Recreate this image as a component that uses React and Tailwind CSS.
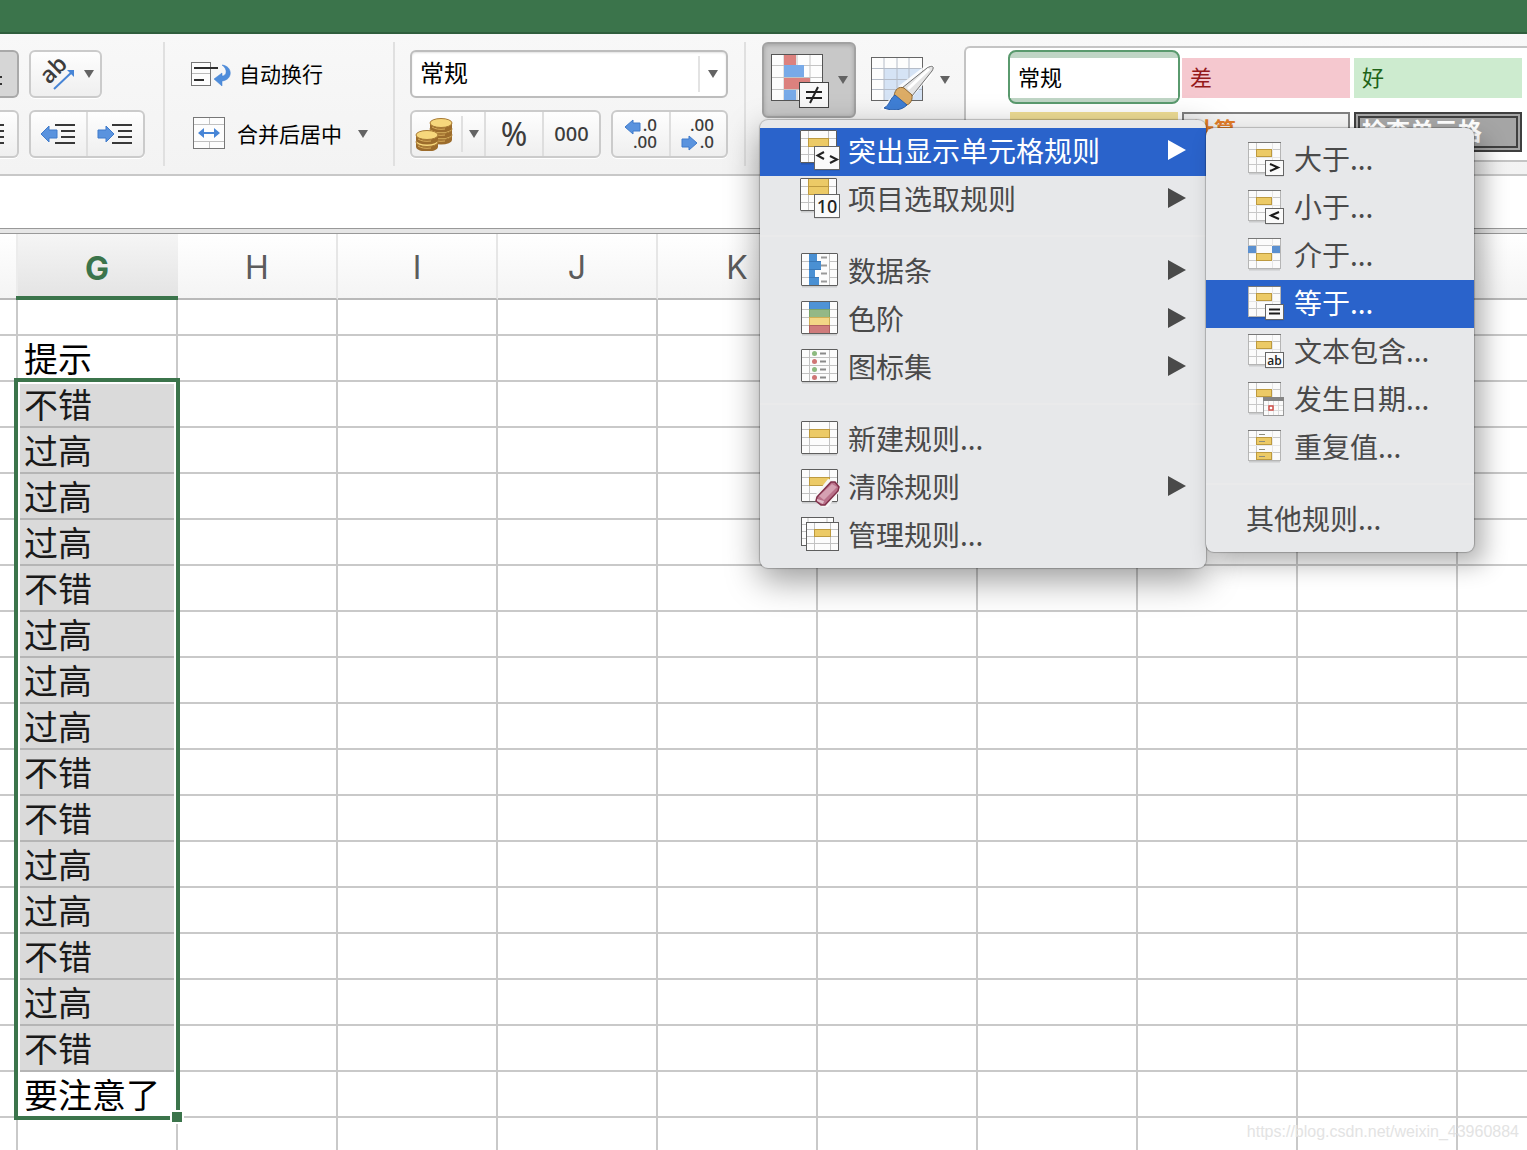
import { useState } from 'react';

const COLUMNS = ['G', 'H', 'I', 'J', 'K', 'L', 'M', 'N', 'O', 'P'];
const TIPS = ['不错', '过高', '过高', '过高', '不错', '过高', '过高', '过高', '不错', '不错', '过高', '过高', '不错', '过高', '不错', '要注意了'];

const RULE_MENU = [
  { label: '突出显示单元格规则', icon: 'compare', arrow: true },
  { label: '项目选取规则', icon: 'top10', arrow: true },
  null,
  { label: '数据条', icon: 'bars', arrow: true },
  { label: '色阶', icon: 'scales', arrow: true },
  { label: '图标集', icon: 'iconset', arrow: true },
  null,
  { label: '新建规则...', icon: 'new' },
  { label: '清除规则', icon: 'clear', arrow: true },
  { label: '管理规则...', icon: 'manage' },
];

const HIGHLIGHT_MENU = [
  { label: '大于...', icon: 'gt' },
  { label: '小于...', icon: 'lt' },
  { label: '介于...', icon: 'between' },
  { label: '等于...', icon: 'eq' },
  { label: '文本包含...', icon: 'text' },
  { label: '发生日期...', icon: 'date' },
  { label: '重复值...', icon: 'dup' },
  null,
  { label: '其他规则...' },
];

const BUTTON = 'border-2 border-[#cbcbcb] bg-linear-to-b from-[#fefefe] to-[#efefef] flex items-center shadow-[0_1px_0_#fff]';

function Caret() {
  return (
    <svg width="10" height="8" viewBox="0 0 10 8" className="shrink-0"><path d="M0 0H10L5 8Z" fill="#636363" /></svg>
  );
}

function Separator({ className = '' }) {
  return <div className={`w-0.5 h-[124px] mt-2 bg-[#e0e0e0] shrink-0 ${className}`} />;
}

/* ---------- ribbon icons ---------- */

function OrientationIcon() {
  return (
    <svg width="50" height="44" viewBox="0 0 50 44" className="shrink-0 overflow-visible">
      <text x="18" y="33" transform="rotate(-45 18 33)" fontSize="23" fontFamily="Open Sans, sans-serif" fontWeight="600" fill="#3c3c3c">ab</text>
      <path d="M23 37L41 20" stroke="#4785d6" strokeWidth="2" fill="none" />
      <path d="M36 18H43V25Z" fill="#4785d6" />
    </svg>
  );
}

function IndentIcon({ right }) {
  return (
    <svg width="36" height="24" viewBox="0 0 36 24">
      <path d={right ? 'M17 12L9 4V8H1V16H9V20Z' : 'M1 12L9 4V8H17V16H9V20Z'} fill="#5a93de" stroke="#3f7bcb" />
      <path d="M15 3H35M21 9H35M21 15H35M15 21H35" stroke="#383838" strokeWidth="2" />
    </svg>
  );
}

function WrapIcon() {
  return (
    <svg width="40" height="30" viewBox="0 0 40 30">
      <rect x=".5" y="3.500" width="19" height="23" fill="#fdfdfd" stroke="#777" />
      <path d="M1 14.500H19" stroke="#bbb" />
      <path d="M3 9H27M3 21H13" stroke="#2e2e2e" strokeWidth="2" />
      <path d="M31 6C42 7 42 21 31 22V27L23 20L31 14V17C36 17 37 10 31 6Z" fill="#4f8ddb" stroke="#3f7fd0" strokeWidth=".5" />
    </svg>
  );
}

function MergeIcon() {
  return (
    <svg width="34" height="34" viewBox="0 0 34 34">
      <rect x="2.500" y=".5" width="31" height="31" fill="#fdfdfd" stroke="#777" />
      <path d="M3 7.500H33M3 24.500H33M18.500 1V7M18.500 25V31" stroke="#c0c0c0" />
      <path d="M7 16L13 11V15H23V11L29 16L23 21V17H13V21Z" fill="#4785d6" />
    </svg>
  );
}

function Coin({ x, y }) {
  return (
    <g>
      <path d={`M${x - 11} ${y}V${y + 5}A11 4.500 0 0 0 ${x + 11} ${y + 5}V${y}Z`} fill="#9c6c2c" />
      <ellipse cx={x} cy={y} rx="11" ry="4.500" fill="#f7d77c" stroke="#a87a35" />
      <path d={`M${x - 9} ${y + 4}A11 4.500 0 0 0 ${x + 4} ${y + 6}`} stroke="#d9ae5c" fill="none" />
    </g>
  );
}

function CoinsIcon() {
  return (
    <svg width="40" height="34" viewBox="0 0 40 34">
      <Coin x={26} y={18} />
      <Coin x={26} y={12} />
      <Coin x={26} y={6} />
      <Coin x={12} y={25} />
      <Coin x={12} y={18} />
    </svg>
  );
}

function DecimalIcon({ more }) {
  return (
    <svg width="38" height="44" viewBox="0 0 38 44" fontFamily="Noto Sans, sans-serif" fontSize="17" fontWeight="500" fill="#3c3c3c">
      <text x="35" y="19" textAnchor="end">{more ? '.0' : '.00'}</text>
      <text x="35" y="36" textAnchor="end">{more ? '.00' : '.0'}</text>
      <path d={more ? 'M3 15L11 8V11H18V19H11V22Z' : 'M18 31L10 24V27H3V35H10V38Z'} fill="#5a93de" stroke="#3f7bcb" />
    </svg>
  );
}

function ConditionalIcon() {
  return (
    <svg width="60" height="60" viewBox="0 -3 60 60">
      <rect x="1.500" y="1.500" width="51" height="46" fill="#fdfdfd" />
      <path d="M14 1V48M27 1V48M40 1V48M1 12.500H53M1 24.500H53M1 36.500H53" stroke="#c4c4c4" />
      <path d="M14 2H26V12H14ZM14 25H40V36H14Z" fill="#dc817e" />
      <path d="M14 12H34V24H14ZM14 37H26V47H14Z" fill="#78aae8" />
      <rect x="1.500" y="1.500" width="51" height="46" fill="none" stroke="#555" />
      <rect x="29.500" y="29.500" width="29" height="25" fill="#f8f8f8" stroke="#444" />
      <path d="M36 39H52M36 45H52M48 34L40 50" stroke="#222" strokeWidth="2" fill="none" />
    </svg>
  );
}

function TableFormatIcon() {
  return (
    <svg width="64" height="60" viewBox="0 -4 64 60">
      <rect x="1.500" y="3.500" width="51" height="43" fill="#fdfdfd" />
      <path d="M14 14H52V46H14Z" fill="#d5e3f5" />
      <path d="M14 3V47M27 3V47M39 3V47M1 14.500H53M1 25.500H53M1 35.500H53" stroke="#b5bcc8" />
      <rect x="1.500" y="3.500" width="51" height="43" fill="none" stroke="#666" />
      <path d="M64 12L61 22L44 41L38 50L26 56L10 56L24 40L30 31L52 14L60 10Z" fill="#fff" opacity=".85" />
      <path d="M32 34L57 14C62 11 65 12 62 17L42 42Z" fill="#e4e4e4" stroke="#707070" />
      <path d="M38 35L59 15" stroke="#fff" strokeWidth="3" />
      <path d="M24 42C25 35 29 32 34 34L42 41C43 48 38 52 34 51Z" fill="#dcac66" stroke="#8a6430" />
      <path d="M25 41L37 51C31 57 22 57 14 54C20 51 20 44 25 41Z" fill="#3f7fd6" stroke="#2c60ad" />
    </svg>
  );
}

/* ---------- menu icons ---------- */

function Sheet({ x = 1, y = 5, children }) {
  return (
    <g transform={`translate(${x} ${y})`}>
      <path d="M1 33.500H36" stroke="#000" opacity=".12" strokeWidth="2" />
      <rect x=".5" y=".5" width="36" height="32" fill="#fcfcfc" />
      <path d="M8.500 0V33M28.500 0V33M0 8.500H37M0 16.500H37M0 24.500H37" stroke="#c2c2c2" />
      {children}
      <rect x=".5" y=".5" width="36" height="32" rx=".5" fill="none" stroke="#5e5e5e" />
    </g>
  );
}

function Badge({ x, y, w, h, children }) {
  return (
    <g>
      <rect x={x} y={y + 1} width={w} height={h} fill="#000" opacity=".15" />
      <rect x={x} y={y} width={w} height={h} fill="#fafafa" stroke="#666" />
      {children}
    </g>
  );
}

const GOLD = { fill: '#ecca66', stroke: '#bd9a3f' };

function RuleIcon({ name }) {
  return (
    <svg width="40" height="48" viewBox="0 0 40 48" className="shrink-0">
      {name === 'compare' && (
        <>
          <Sheet x={0} y={2}><rect x="8.500" y="8.500" width="20" height="8" {...GOLD} /></Sheet>
          <Badge x={14.5} y={18.5} w={25} h={23}>
            <path d="M24 24L17.500 27.500L24 31M30 28L37 31.500L30 35" stroke="#222" strokeWidth="2" fill="none" />
          </Badge>
        </>
      )}
      {name === 'top10' && (
        <>
          <Sheet x={0} y={2}><path d="M8.500 .5H28.500V16.500H8.500ZM8.500 8.500H28.500" {...GOLD} /></Sheet>
          <Badge x={14.5} y={18.5} w={25} h={23}>
            <text x="27" y="37" textAnchor="middle" fontSize="18" fontWeight="500" fontFamily="Noto Sans, sans-serif" fill="#222">10</text>
          </Badge>
        </>
      )}
      {name === 'bars' && (
        <Sheet>
          <path d="M9 1H28V32H9Z" fill="#fcfcfc" />
          <path d="M8 1H16V8H20V16H14V24H18V32H8Z" fill="#4a90d3" />
          <path d="M8 8.500H20M8 16.500H20M8 24.500H18" stroke="#3b79b8" />
          <path d="M20 4.500H26M20 12.500H26M20 20.500H26M20 28.500H26" stroke="#999" strokeWidth="2" />
        </Sheet>
      )}
      {name === 'scales' && (
        <Sheet>
          <rect x="8.500" y=".5" width="20" height="8" fill="#4f93d6" stroke="#3f7fbf" />
          <rect x="8.500" y="8.500" width="20" height="8" fill="#94b886" stroke="#7ba56c" />
          <rect x="8.500" y="16.500" width="20" height="8" fill="#f3d686" stroke="#cfae55" />
          <rect x="8.500" y="24.500" width="20" height="8" fill="#cf7b7b" stroke="#b06060" />
        </Sheet>
      )}
      {name === 'iconset' && (
        <Sheet>
          {[4.5, 12.5, 20.5, 28.5].map((y, i) => (
            <g key={y}>
              <circle cx="13.500" cy={y} r="2.500" fill={i % 2 ? '#cf7575' : '#8cba7f'} />
              <path d={`M19 ${y}H25`} stroke="#8a8a8a" strokeWidth="2" />
            </g>
          ))}
        </Sheet>
      )}
      {name === 'new' && <Sheet><rect x="8.500" y="8.500" width="20" height="8" {...GOLD} /></Sheet>}
      {name === 'clear' && (
        <>
          <Sheet><rect x="8.500" y="8.500" width="20" height="8" {...GOLD} /></Sheet>
          <path d="M13 34L28 15L34 16L42 24L28 43L22 43Z" fill="#f6f6f6" />
          <path d="M17 33L31 18L35 18L39 23L38 27L25 41L21 41L16 37Z" fill="#b9718a" stroke="#80304a" strokeWidth="1.500" />
          <path d="M19 32L32 20L37 23L24 36Z" fill="#d5a1b2" />
          <path d="M17 35L24 37L23 40L17 37Z" fill="#e0bcc8" />
        </>
      )}
      {name === 'manage' && (
        <>
          <rect x="1.500" y="5.500" width="32" height="28" fill="#fcfcfc" stroke="#5e5e5e" />
          <path d="M8 6V10M27 6V10M2 12.500H6M2 19.500H6M2 26.500H6" stroke="#c2c2c2" />
          <rect x="6.500" y="10.500" width="32" height="28" fill="#fcfcfc" />
          <path d="M14.500 10V38M30.500 10V38M7 17.500H38M7 24.500H38M7 31.500H38" stroke="#c2c2c2" />
          <rect x="14.500" y="17.500" width="16" height="7" {...GOLD} />
          <rect x="6.500" y="10.500" width="32" height="28" fill="none" stroke="#5e5e5e" />
        </>
      )}
    </svg>
  );
}

function HighlightIcon({ name }) {
  const mark = { gt: 'M22 28L30 31.500L22 35', lt: 'M31 28L23 31.500L31 35', eq: 'M21 29.500H32M21 33.500H32' }[name];

  return (
    <svg width="40" height="48" viewBox="-2 0 40 48" className="shrink-0">
      <path d="M1 37.500H32" stroke="#000" opacity=".12" strokeWidth="2" />
      <rect x=".5" y="6.500" width="32" height="30" fill="#fbfbfb" stroke="#b5b5b5" />
      <path d="M8.500 7V36M1 13.500H32M1 28.500H32" stroke="#c8c8c8" />
      <path d="M24.500 7V36M1 21.500H32" stroke="#e6e6e6" />
      <path d="M0 6.500H33" stroke="#777" />
      {name === 'between' && (
        <>
          <path d="M0 14H8V21H0ZM24 14H32V21H24Z" fill="#5b90d0" />
          <rect x="8.500" y="21.500" width="15" height="7" {...GOLD} />
        </>
      )}
      {name === 'dup' && (
        <>
          <rect x="8.500" y="13.500" width="15" height="7" {...GOLD} />
          <rect x="8.500" y="28.500" width="15" height="7" {...GOLD} />
          <path d="M11 10.500H17M11 17.500H17M11 25.500H17M11 32.500H17" stroke="#8d8d7a" />
        </>
      )}
      {name !== 'between' && name !== 'dup' && <rect x="8.500" y="13.500" width="15" height="7" {...GOLD} />}
      {mark && (
        <Badge x={17.5} y={24.5} w={18} h={15}>
          <path d={mark} stroke="#1a1a1a" strokeWidth="2" fill="none" />
        </Badge>
      )}
      {name === 'text' && (
        <Badge x={17.5} y={24.5} w={18} h={15}>
          <text x="26.500" y="37" textAnchor="middle" fontSize="12" fontWeight="600" fontFamily="Open Sans, sans-serif" fill="#222">ab</text>
        </Badge>
      )}
      {name === 'date' && (
        <>
          <rect x="15.500" y="21.500" width="20" height="18" fill="#fbfbfb" stroke="#999" />
          <path d="M20.500 25V39M25.500 25V39M30.500 25V39M16 29.500H35M16 34.500H35" stroke="#ddd" />
          <path d="M15 21H36V25H15Z" fill="#858585" />
          <rect x="21" y="30" width="4" height="4" fill="#fff" stroke="#cf4f4a" strokeWidth="1.500" />
        </>
      )}
    </svg>
  );
}

/* ---------- menus ---------- */

const MENU = 'absolute py-2 rounded-lg bg-[#e7e8ea] text-[28px] text-[#4a4a4a]';

function MenuSeparator() {
  return (
    <li role="separator" className="h-6 py-[11px]"><div className="h-0.5 bg-[#eaeaeb]" /></li>
  );
}

function HighlightMenu() {
  const [active, setActive] = useState('eq');

  return (
    <ul role="menu" className={`${MENU} left-full top-0 w-[268px] shadow-[0_0_1px_1px_rgba(0,0,0,0.22),10px_12px_24px_rgba(0,0,0,0.3)]`}>
      {HIGHLIGHT_MENU.map((item, i) => item ? (
        <li key={i} role="none">
          <button role="menuitem" onMouseEnter={() => setActive(item.icon)} className={`w-full h-12 pl-10 flex items-center gap-2 whitespace-nowrap ${item.icon === active ? 'bg-[#2a63cb] text-white' : ''}`}>
            {item.icon && <HighlightIcon name={item.icon} />}
            <span className="leading-11 pb-1">{item.label}</span>
          </button>
        </li>
      ) : <MenuSeparator key={i} />)}
    </ul>
  );
}

function RuleMenu() {
  return (
    <ul role="menu" className={`${MENU} top-[78px] -left-0.5 w-[446px] z-30 shadow-[0_0_1px_1px_rgba(0,0,0,0.22),0_12px_34px_rgba(0,0,0,0.4)]`}>
      {RULE_MENU.map((item, i) => item ? (
        <li key={i} role="none" className="relative">
          <button role="menuitem" className={`w-full h-12 pl-10 pr-5 flex items-center gap-2 whitespace-nowrap ${i === 0 ? 'bg-[#2a63cb] text-white' : ''}`}>
            <RuleIcon name={item.icon} />
            <span className="leading-11 pb-1">{item.label}</span>
            {item.arrow && (
              <svg width="18" height="20" viewBox="0 0 18 20" className="ml-auto mb-1"><path d="M0 0L18 10L0 20Z" fill="currentColor" /></svg>
            )}
          </button>
          {i === 0 && <HighlightMenu />}
        </li>
      ) : <MenuSeparator key={i} />)}
    </ul>
  );
}

/* ---------- ribbon ---------- */

function StyleGallery() {
  return (
    <div className="ml-3 mt-3 h-[116px] flex-1 min-w-0 overflow-hidden rounded-l-md border-2 border-r-0 border-[#c4c4c4] bg-white pl-11 pt-[10px]">
      <div className="grid grid-cols-[repeat(3,168px)] auto-rows-[40px] gap-x-1 gap-y-[14px] text-[22px] text-left leading-9">
        <button className="relative text-left pl-2 pb-1 text-black">
          <span className="absolute -inset-x-0.5 -top-2 -bottom-1.5 rounded-lg border-2 border-[#5a9a6e] bg-[#bfd5c5]" />
          <span className="absolute inset-0 bg-white" />
          <span className="relative">常规</span>
        </button>
        <button className="bg-[#f5c8cf] text-[#94191a] text-left pl-2 pb-1">差</button>
        <button className="bg-[#cdebcf] text-[#1f6318] text-left pl-2 pb-1">好</button>
        <button className="bg-[#f1df96] text-[#8f5f0c] text-left pl-2 pb-1">适中</button>
        <button className="border-2 border-[#7f7f7f] bg-[#f1f1f1] text-[#e07b28] font-bold text-left pl-2 pb-2 leading-7">计算</button>
        <button className="border-6 border-double border-[#3f3f3f] bg-[#a5a5a5] text-white font-bold text-2xl leading-6 text-left pl-0.5 pb-1">检查单元格</button>
      </div>
    </div>
  );
}

function Ribbon() {
  return (
    <div className="h-[142px] shrink-0 flex items-start bg-linear-to-b from-[#f8f8f8] to-[#f3f3f3] border-b-2 border-[#c8c8c8]">
      <div className="w-[145px] shrink-0 pt-4 flex flex-col gap-3">
        <div className="flex gap-[10px]">
          <button aria-label="底端对齐" className="w-[19px] h-12 rounded-r-md border-2 border-l-0 border-[#a9a9a9] bg-[#d6d6d6]">
            <svg width="4" height="28" viewBox="0 0 4 28"><path d="M0 17H2M0 24H2" stroke="#333" strokeWidth="2" /></svg>
          </button>
          <button aria-label="方向" className={`${BUTTON} w-[73px] h-12 rounded-md gap-[3px]`}>
            <OrientationIcon />
            <Caret />
          </button>
        </div>
        <div className="flex gap-[10px]">
          <button aria-label="右对齐" className={`${BUTTON} w-[19px] h-12 rounded-r-md border-l-0`}>
            <svg width="4" height="24" viewBox="0 0 4 24"><path d="M0 3H4M0 9H4M0 15H4M0 21H4" stroke="#383838" strokeWidth="2" /></svg>
          </button>
          <div className={`${BUTTON} w-[117px] h-12 rounded-md`}>
            <button aria-label="减少缩进量" className="flex-1 h-full flex items-center justify-center border-r-2 border-[#dedede]"><IndentIcon /></button>
            <button aria-label="增加缩进量" className="flex-1 h-full flex items-center justify-center"><IndentIcon right /></button>
          </div>
        </div>
      </div>

      <Separator className="ml-[18px]" />

      <div className="w-[228px] shrink-0 pl-[26px] pt-4 flex flex-col gap-3 text-[21px] text-black">
        <button className="h-12 flex items-center gap-2">
          <WrapIcon />
          <span>自动换行</span>
        </button>
        <button className="h-12 flex items-center">
          <MergeIcon />
          <span className="ml-3 mr-4">合并后居中</span>
          <Caret />
        </button>
      </div>

      <Separator />

      <div className="ml-[15px] w-[318px] shrink-0 pt-4 flex flex-col gap-3">
        <div className="relative">
          <select aria-label="数字格式" defaultValue="常规" className="w-full h-12 appearance-none rounded-md border-2 border-[#bdbdbd] bg-white pl-2 pb-1 text-2xl leading-9 text-black shadow-[inset_0_1px_2px_rgba(0,0,0,0.12)]">
            <option>常规</option>
            <option>数字</option>
            <option>货币</option>
          </select>
          <div className="absolute right-[10px] inset-y-2 flex items-center gap-2 pointer-events-none">
            <div className="w-0.5 h-9 bg-[#e3e3e3]" />
            <Caret />
          </div>
        </div>
        <div className="flex gap-[10px]">
          <div className={`${BUTTON} w-[191px] h-12 rounded-md font-['Noto_Sans'] text-[#3c3c3c]`}>
            <button aria-label="货币" className="w-[74px] h-full pl-[3px] flex items-center gap-1.5 border-r-2 border-[#dedede]">
              <CoinsIcon />
              <span className="w-0.5 h-9 bg-[#e0e0e0]" />
              <Caret />
            </button>
            <button className="w-[58px] h-full text-[32px] leading-8 border-r-2 border-[#dedede]">%</button>
            <button className="flex-1 h-full text-xl font-medium">000</button>
          </div>
          <div className={`${BUTTON} w-[117px] h-12 rounded-md`}>
            <button aria-label="增加小数位数" className="flex-1 h-full flex items-center justify-center border-r-2 border-[#dedede]"><DecimalIcon more /></button>
            <button aria-label="减少小数位数" className="flex-1 h-full flex items-center justify-center"><DecimalIcon /></button>
          </div>
        </div>
      </div>

      <Separator className="ml-4" />

      <div className="relative ml-4 mt-2 shrink-0">
        <button aria-label="条件格式" aria-expanded="true" className="w-[94px] h-[76px] pl-1.5 flex items-center gap-2 rounded-md border-2 border-[#a2a2a2] bg-[#c8c8c8] shadow-[inset_0_1px_4px_rgba(0,0,0,0.2)]">
          <ConditionalIcon />
          <Caret />
        </button>
        <RuleMenu />
      </div>
      <button aria-label="套用表格格式" className="ml-[14px] mt-2 w-[82px] h-[76px] shrink-0 flex items-center gap-1.5">
        <TableFormatIcon />
        <Caret />
      </button>
      <StyleGallery />
    </div>
  );
}

/* ---------- sheet ---------- */

function SelectionFrame() {
  return (
    <div className="absolute -top-1 -left-1 w-[166px] h-[742px] z-10 border-4 border-[#3b744b] shadow-[inset_0_0_0_2px_#fff] pointer-events-none">
      <div className="absolute -right-2 -bottom-2 size-[14px] border-2 border-white bg-[#3b744b]" />
    </div>
  );
}

function Row({ tip, selected, filled, height }) {
  return (
    <tr className={height}>
      <td className="border-r-2 border-b-2 border-[#c9c9c9]" />
      <td className={`relative p-0 pl-1.5 border-r-2 border-b-2 whitespace-nowrap ${filled ? 'bg-[#dadada] text-[#1a1a1a] border-[#b5b5b5]' : 'border-[#c9c9c9] text-black'}`}>
        {tip}
        {selected && <SelectionFrame />}
      </td>
      {COLUMNS.slice(1).map((c) => <td key={c} className="border-r-2 last:border-r-0 border-b-2 border-[#c9c9c9]" />)}
    </tr>
  );
}

export default function App() {
  return (
    <div className="relative h-screen overflow-hidden flex flex-col bg-white font-['Noto_Sans_CJK_SC',sans-serif]">
      <header className="h-[34px] shrink-0 bg-[#3b744b] border-b-2 border-[#2f5e3d]" />
      <Ribbon />
      <input aria-label="编辑栏" className="h-[52px] shrink-0 w-full bg-white outline-none" />
      <div className="h-1.5 shrink-0 bg-[#e6e6e6] border-y border-[#999]" />

      <table className="w-full table-fixed border-separate border-spacing-0 text-[34px] leading-[44px]">
        <colgroup>
          <col className="w-[18px]" />
          {COLUMNS.slice(0, 9).map((c) => <col key={c} className="w-[160px]" />)}
          <col />
        </colgroup>
        <thead>
          <tr className="h-[66px] bg-linear-to-b from-white to-[#f4f4f4] font-['Inter'] text-[32px] text-[#5c5c5c]">
            <th className="border-r-2 border-b-2 border-r-[#ececec] border-b-[#b9b9b9]" />
            {COLUMNS.map((c) => c === 'G' ? (
              <th key={c} className="relative p-0 pt-1 pr-0.5 font-bold text-[#3b744b] bg-linear-to-b from-[#f5f5f5] to-[#e3e3e3]">
                {c}
                <div className="absolute -left-0.5 right-0 bottom-0 h-1 bg-[#3b744b]" />
              </th>
            ) : (
              <th key={c} className="p-0 pt-1 font-normal border-r-2 last:border-r-0 border-b-2 border-r-[#e6e6e6] border-b-[#b9b9b9]">{c === 'P' ? '' : c}</th>
            ))}
          </tr>
        </thead>
        <tbody>
          <Row height="h-9" />
          <Row height="h-[46px]" tip="提示" />
          {TIPS.map((tip, i) => <Row key={i} height="h-[46px]" tip={tip} selected={i === 0} filled={i < TIPS.length - 1} />)}
          <Row height="h-[46px]" />
        </tbody>
      </table>

      <p className="absolute right-2 bottom-1.5 text-base font-['Liberation_Sans'] text-[#e3e3e3]">https://blog.csdn.net/weixin_43960884</p>
    </div>
  );
}
